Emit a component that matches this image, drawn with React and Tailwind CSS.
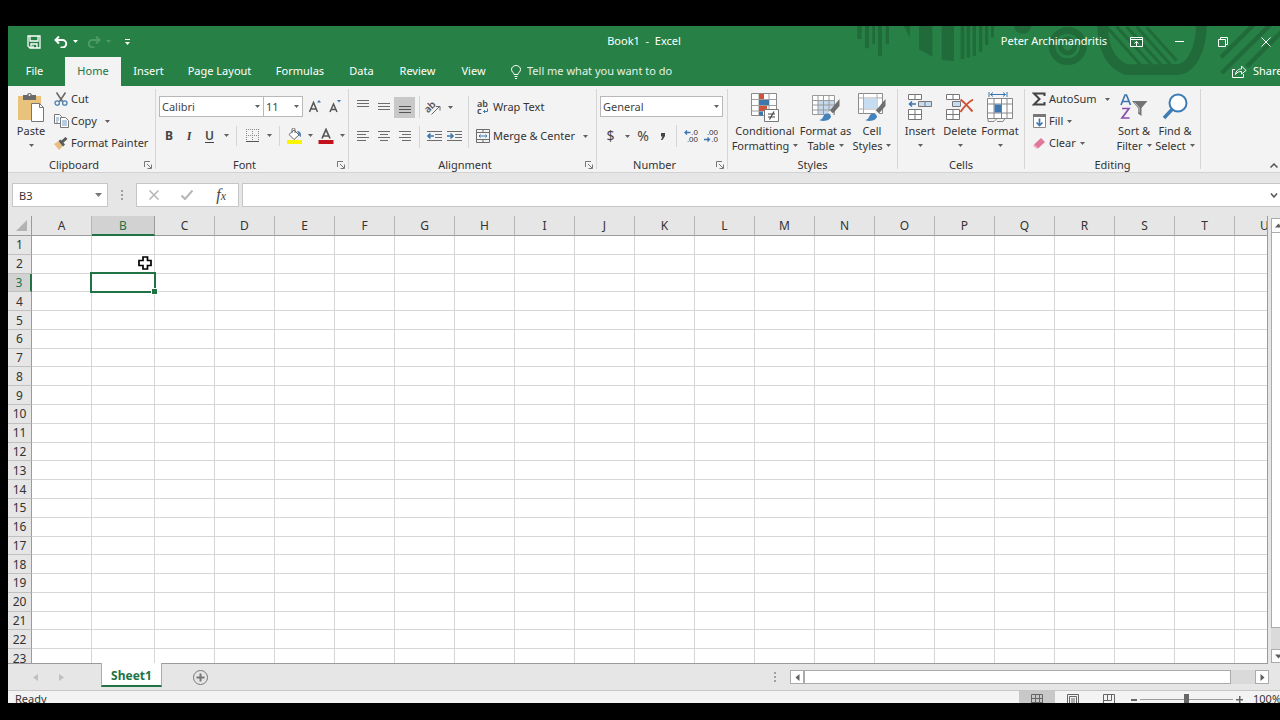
import { useState } from "react";

const TABS = [
  { name: "File", width: "w-[53px]" },
  { name: "Home", width: "ml-1 w-14" },
  { name: "Insert", width: "w-[55px]" },
  { name: "Page Layout", width: "w-[87px]" },
  { name: "Formulas", width: "w-[74px]" },
  { name: "Data", width: "w-[49px]" },
  { name: "Review", width: "w-[63px]" },
  { name: "View", width: "w-[49px]" },
];

const COLUMNS = "ABCDEFGHIJKLMNOPQRSTU".split("");
const ROWS = Array.from({ length: 23 }, (_, i) => i + 1);

/* ---------- small helpers ---------- */

function Caret({ className = "", fill = "fill-[#606060]" }) {
  return (
    <svg viewBox="0 0 5 3" className={`h-[3px] w-[5px] shrink-0 ${fill} ${className}`}>
      <path d="M0 0h5L2.5 3z" />
    </svg>
  );
}

function CaretButton({ label }) {
  return (
    <button aria-label={label} className="flex h-5 w-3 shrink-0 items-center justify-center">
      <Caret />
    </button>
  );
}

function IconButton({ label, className = "w-5", children }) {
  return (
    <button aria-label={label} className={`flex h-[21px] shrink-0 items-center justify-center ${className}`}>
      {children}
    </button>
  );
}

function Divider({ className = "h-[22px]" }) {
  return <div className={`w-px shrink-0 bg-[#d6d6d6] ${className}`} />;
}

function Group({ label, width, launcher, children }) {
  return (
    <>
      <section aria-label={label} className={`flex shrink-0 flex-col ${width}`}>
        <div className="flex h-[72px]">{children}</div>
        <div className="flex h-3.5 items-center">
          <span className="flex-1 text-center leading-[14px]">{label}</span>
          {launcher && (
            <button aria-label={`${label} settings`} className="flex w-[15px] items-center justify-center">
              <svg viewBox="0 0 8 8" className="h-2 w-2 fill-none stroke-[#777]">
                <path d="M.5 6V.5H6M3 3l4 4M7.5 3.5v4h-4" />
              </svg>
            </button>
          )}
        </div>
      </section>
      <div className="mt-[3px] mb-[3px] w-px shrink-0 bg-[#d6d6d6]" />
    </>
  );
}

function BigButton({ icon, line1, line2, width }) {
  return (
    <button className={`flex shrink-0 flex-col items-center pt-[5px] whitespace-nowrap ${width}`}>
      <span className="flex h-8 items-center justify-center">{icon}</span>
      <span className="leading-[15px]">{line1}</span>
      <span className="flex h-[15px] items-center gap-1 leading-[15px]">
        {line2}
        <Caret />
      </span>
    </button>
  );
}

function SmallButton({ icon, label, caret, gap = "gap-1" }) {
  return (
    <button className={`flex h-[22px] items-center whitespace-nowrap ${gap}`}>
      <span className="flex items-center gap-[3px]">
        <span className="flex w-3.5 shrink-0 justify-center">{icon}</span>
        {label}
      </span>
      {caret && <Caret />}
    </button>
  );
}

function Select({ label, value, width }) {
  return (
    <div className={`relative h-[21px] shrink-0 ${width}`}>
      <select
        aria-label={label}
        defaultValue={value}
        className="h-full w-full appearance-none border border-[#b8b8b8] bg-white pl-0.5 text-[11px] leading-[19px] text-[#444] outline-none"
      >
        <option>{value}</option>
      </select>
      <Caret className="pointer-events-none absolute top-[9px] right-1" />
    </div>
  );
}

/* ---------- icons ---------- */

function PasteIcon() {
  return (
    <svg viewBox="0 0 28 30" className="h-[30px] w-7">
      <path d="M1 4h23v24H1z" fill="#e9c27c" />
      <path d="M6 3h4a2.6 2.6 0 0 1 5 0h4v5H6z" fill="#6a6a6a" />
      <circle cx="12.500" cy="3" r="1" fill="#f3f3f3" />
      <path d="M14.500 11.500h8l4 4v14h-12z" fill="#fff" stroke="#777" />
      <path d="M22.500 11.500v4h4" fill="none" stroke="#777" />
    </svg>
  );
}

function CutIcon() {
  return (
    <svg viewBox="0 0 14 14" className="h-3.5 w-3.5 fill-none">
      <path d="M2.500 0.500l6 9M11.500 0.500l-6 9" stroke="#6a6a6a" strokeWidth="1.600" />
      <circle cx="3.200" cy="11" r="2.200" stroke="#4e83b5" strokeWidth="1.300" />
      <circle cx="10.800" cy="11" r="2.200" stroke="#4e83b5" strokeWidth="1.300" />
    </svg>
  );
}

function CopyIcon() {
  return (
    <svg viewBox="0 0 15 14" className="h-3.5 w-[15px] shrink-0">
      <path d="M.5.5h5l2 2v7h-7z" fill="#fff" stroke="#777" />
      <path d="M2 4h3M2 6h3M2 8h2" stroke="#6f9bc4" />
      <path d="M6.500 3.500h5l3 3v7h-8z" fill="#fff" stroke="#777" />
      <path d="M8 7h5M8 9h5M8 11h5" stroke="#6f9bc4" />
    </svg>
  );
}

function PainterIcon() {
  return (
    <svg viewBox="0 0 14 13" className="h-[13px] w-3.5">
      <path d="M0 7l5-3 4 5-4 4z" fill="#e9bd80" />
      <path d="M4.500 4l2-1.500 4.500 5-2 2z" fill="#595959" />
      <path d="M8 5l4.500-4" stroke="#595959" strokeWidth="3" />
    </svg>
  );
}

function BordersIcon() {
  return (
    <svg viewBox="0 0 13 13" className="h-[13px] w-[13px] fill-none stroke-[#8a8a8a]">
      <path d="M.5 0v12M6.500 0v12M12.500 0v12M0 .5h13M0 6.500h13" strokeDasharray="1 1" />
      <path d="M0 12.500h13" stroke="#555" />
    </svg>
  );
}

function FillColorIcon() {
  return (
    <svg viewBox="0 0 17 16" className="h-4 w-[17px]">
      <path d="M3 6.500l5-4.500 5 5-5 4.500z" fill="#fff" stroke="#666" />
      <path d="M6 5V1.500a1.500 1.500 0 0 1 3 0V5" fill="none" stroke="#666" />
      <path d="M11 3c3 0 4.500 2 4 6-1.500-.5-2-2-2.500-3z" fill="#4e83b5" />
      <path d="M1 12h15v4H1z" fill="#fbf500" />
    </svg>
  );
}

function LinesIcon({ rows, highlight }) {
  return (
    <svg viewBox="0 0 14 14" className={`h-3.5 w-3.5 ${highlight ? "stroke-[#555]" : "stroke-[#6c6c6c]"}`}>
      {rows.map(([x, y, w]) => (
        <path key={y} d={`M${x} ${y}.5h${w}`} />
      ))}
    </svg>
  );
}

function IndentIcon({ increase }) {
  return (
    <svg viewBox="0 0 15 13" className="h-[13px] w-[15px] fill-none">
      <path d="M0 .5h15M8 3.500h7M8 6.500h7M0 9.500h15" stroke="#6c6c6c" />
      <path d={increase ? "M0 5h6M3.500 2.500L6 5 3.500 7.500" : "M7 5H1M3.500 2.500L1 5l2.500 2.500"} stroke="#3e77ae" strokeWidth="1.600" />
    </svg>
  );
}

function OrientationIcon() {
  return (
    <svg viewBox="0 0 16 15" className="h-[15px] w-4 overflow-visible">
      <text x="0" y="11" transform="rotate(-45 4 10)" fontSize="10" fontWeight="600" fill="#555">
        ab
      </text>
      <path d="M5.500 14.500l8-8M10 6.500h4v4" fill="none" stroke="#666" />
    </svg>
  );
}

function WrapIcon() {
  return (
    <svg viewBox="0 0 12 15" className="h-[15px] w-3 overflow-visible">
      <text fontSize="9" fontWeight="600" fill="#444">
        <tspan x="0" y="7">ab</tspan>
        <tspan x="0" y="14">c</tspan>
      </text>
      <path d="M10.500 8.500v3H6.500M8 10l-1.500 1.500L8 13" fill="none" stroke="#3e77ae" />
    </svg>
  );
}

function MergeIcon() {
  return (
    <svg viewBox="0 0 14 14" className="h-3.5 w-3.5 fill-none stroke-[#6c6c6c]">
      <path d="M.5.5h13v13H.5zM.5 3.500h13M.5 10.500h13M7 .5v3M7 10.500v3" />
      <path d="M3 7h8M4.500 5.500L3 7l1.500 1.500M9.500 5.500L11 7 9.500 8.500" stroke="#3e77ae" />
    </svg>
  );
}

function DecimalIcon({ increase }) {
  return (
    <svg viewBox="0 0 14 14" className="h-3.5 w-3.5 overflow-visible font-['Liberation_Sans',sans-serif]">
      <text textAnchor="end" fontSize="8" fill="#333">
        <tspan x="14" y="6">{increase ? ".0" : ".00"}</tspan>
        <tspan x="14" y="13">{increase ? ".00" : ".0"}</tspan>
      </text>
      <path
        d={increase ? "M6.500 3.500H1M3 1.500l-2 2 2 2" : "M0 10.500h5.500M3.500 8.500l2 2-2 2"}
        fill="none"
        stroke="#3e77ae"
        strokeWidth="1.300"
      />
    </svg>
  );
}

function ConditionalIcon() {
  return (
    <svg viewBox="0 0 28 29" className="h-[29px] w-7">
      <path d="M.5.5h25v22H.5z" fill="#fff" stroke="#8a8a8a" />
      <path d="M.5 6.500h25M.5 12.500h25M.5 18h25M8 .5v22M18 .5v22" stroke="#a0a0a0" />
      <path d="M8 1h5v5H8zM8 13h8v5H8z" fill="#cf5339" />
      <path d="M8 7h10v5H8zM8 18.500h4v4H8z" fill="#3e77ae" />
      <path d="M13.500 16.500h14v12h-14z" fill="#fff" stroke="#777" />
      <path d="M17 21h7M17 24h7M23 18.500L18.500 26.500" stroke="#444" strokeWidth="1.200" />
    </svg>
  );
}

function BrushShape() {
  return (
    <>
      <path d="M27.500 6v7l-7 8-3-3z" fill="#6f6f6f" />
      <path d="M18 17.500l3.500 3.500-1.500 2-4-3.500z" fill="#f3f3f3" />
      <path d="M7 27c4-.5 3.500-3 5.500-5.500 2-2 6-1 6.500 2-.5 4-7 5.500-12 3.500z" fill="#4382bb" />
    </>
  );
}

function FormatTableIcon() {
  return (
    <svg viewBox="0 0 28 29" className="h-[29px] w-7">
      <path d="M.5 2.500h22v19H.5z" fill="#fff" />
      <path d="M6 7h17v15H6z" fill="#c6d9ec" />
      <path d="M.5 2.500h22v19H.5zM.5 7.500h22M.5 12h22M.5 17h22M6 2.500v19M11.500 2.500v19M17 2.500v19" fill="none" stroke="#9a9a9a" />
      <BrushShape />
    </svg>
  );
}

function CellStylesIcon() {
  return (
    <svg viewBox="0 0 28 29" className="h-[29px] w-7">
      <path d="M.5.5h24v20H.5z" fill="#fff" stroke="#8a8a8a" />
      <path d="M.5 5h24M.5 16h24M5.500.5v20M19 .5v20" stroke="#aaa" />
      <path d="M6 5.500h13v10H6z" fill="#c6dcf1" />
      <BrushShape />
    </svg>
  );
}

function InsertIcon() {
  return (
    <svg viewBox="0 0 26 28" className="h-7 w-[26px] fill-none stroke-[#777]">
      <path d="M1.500 1.500h13v5h-13zM8 1.500v5M1.500 16.500h13v10h-13zM8 16.500v10M1.500 21.500h13" fill="#fff" />
      <path d="M11.500 8.500h13v5h-13zM18 8.500v5" fill="#c6dcf1" />
      <path d="M9 11H2.500M5 8.500L2.500 11 5 13.500" stroke="#3e77ae" strokeWidth="1.600" />
    </svg>
  );
}

function DeleteIcon() {
  return (
    <svg viewBox="0 0 28 28" className="h-7 w-7 fill-none stroke-[#777]">
      <path d="M.5 1.500h13v5H.5zM7 1.500v5M.5 16.500h13v10H.5zM7 16.500v10M.5 21.500h13" fill="#fff" />
      <path d="M6.500 8.500h8v5h-8z" fill="#c6dcf1" />
      <path d="M14.500 6.500c4 3 8.500 8 12 12M27 6.500c-5 3-9.500 8-12.500 12.500" stroke="#cf5339" strokeWidth="2" />
    </svg>
  );
}

function FormatIcon() {
  return (
    <svg viewBox="0 0 28 31" className="h-[31px] w-7 fill-none stroke-[#888]">
      <path d="M3 0v5M21 0v5M4.500 2.500h15M7 .5L4.500 2.500 7 4.500M17 .5l2.500 2L17 4.500" stroke="#3e77ae" />
      <path d="M1.500 6.500h25v20h-25z" fill="#fff" />
      <path d="M1.500 12h25M1.500 21h25M8 6.500v20M15.500 6.500v20M21 6.500v20" />
      <path d="M8.500 12.500h7v8h-7z" fill="#3e77ae" stroke="none" />
      <path d="M2 26.500v3h6l3-3M11 29.500h6l2-3" />
    </svg>
  );
}

function SortIcon() {
  return (
    <svg viewBox="0 0 28 28" className="h-7 w-7">
      <path d="M1 12L5 2h1.500l4 10M2.500 8.500H9" fill="none" stroke="#3e77ae" strokeWidth="1.700" />
      <path d="M2 15.500h7L2 25h7.500" fill="none" stroke="#8a4fae" strokeWidth="1.700" />
      <path d="M12 8h15.500l-6 7v8l-3.500-2.500V15z" fill="#737373" />
      <path d="M14.500 9.500l4.500 5v5" fill="none" stroke="#ccc" />
    </svg>
  );
}

function FindIcon() {
  return (
    <svg viewBox="0 0 26 28" className="h-7 w-[26px] fill-none stroke-[#3e7cb5]">
      <circle cx="16" cy="10" r="8.500" fill="#fff" strokeWidth="2" />
      <path d="M10 16.500l-8 8.500" strokeWidth="3.500" />
    </svg>
  );
}

function TitleArt() {
  return (
    <svg viewBox="0 18 1320 180" className="pointer-events-none absolute top-0 right-0 h-[60px] w-[440px]">
      <g fill="#206b39">
        <path d="M52 15h13v42H52zM75 15h12v70H75zM97 15h8v57h-8zM114 15h12v92h-12zM137 15h10v57h-10zM190 15h20v38z" />
        <path d="M237 15h40v95l-40-22zM305 15h37v108l-37-3zM362 15h11v103h-11zM380 15h10v98h-10zM398 15h10v92h-10zM417 15h10v80h-10zM435 15h10v60h-10zM453 15h9v38h-9z" />
        <circle cx="548" cy="15" r="26" />
      </g>
      <g fill="none" stroke="#206b39">
        <circle cx="683" cy="78" r="47" strokeWidth="20" />
        <circle cx="683" cy="78" r="21" strokeWidth="15" />
        <path d="M788 15c0 70 25 115 70 134h150c45 0 76-60 76-134" strokeWidth="32" />
        <path d="M800 20l115 130M830 20l115 125M860 20l110 122M890 20l105 118M920 22l90 100" strokeWidth="9" />
        <path d="M1240 15l-97 97M1290 15l-145 145M1330 30l-110 110" strokeWidth="13" />
      </g>
    </svg>
  );
}

/* ---------- sections ---------- */

function TitleBar() {
  return (
    <header className="relative flex h-[31px] shrink-0 items-center text-white">
      <div className="flex flex-1 items-center">
        <IconButton label="Save" className="ml-[18px] w-4">
          <svg viewBox="0 0 14 14" className="h-3.5 w-3.5 fill-none stroke-white" strokeWidth="1.300">
            <path d="M1 1h12v12H3l-2-2zM3 1v5h8V1M4 13V9h6v4M6 10.500v2" />
          </svg>
        </IconButton>
        <IconButton label="Undo" className="ml-2.5 w-[18px]">
          <svg viewBox="0 0 14 12" className="h-3 w-3.5 fill-none stroke-white" strokeWidth="2">
            <path d="M5 .5L1.500 4 5 7.500M2 4h6.500a3.500 3.500 0 0 1 0 7.500H6.500" />
          </svg>
        </IconButton>
        <Caret className="ml-[3px]" fill="fill-white" />
        <IconButton label="Redo" className="ml-[7px] w-[18px]">
          <svg viewBox="0 0 14 12" className="h-3 w-3.5 fill-none stroke-[#4d9a66]" strokeWidth="2">
            <path d="M9 .5L12.500 4 9 7.500M12 4H5.500a3.500 3.500 0 0 0 0 7.500H7.500" />
          </svg>
        </IconButton>
        <Caret className="ml-[3px]" fill="fill-[#4d9a66]" />
        <IconButton label="Customize Quick Access Toolbar" className="ml-2 w-4">
          <svg viewBox="0 0 5 6" className="h-1.5 w-[5px] fill-white">
            <path d="M0 0h5v1H0zM0 3h5L2.500 6z" />
          </svg>
        </IconButton>
      </div>
      <h1 className="text-[11px] whitespace-pre">Book1  -  Excel</h1>
      <div className="flex flex-1 items-center justify-end">
        <TitleArt />
        <span className="relative mr-2 text-[11px]">Peter Archimandritis</span>
        <div className="relative flex">
          <IconButton label="Ribbon Display Options" className="w-[43px]">
            <svg viewBox="0 0 13 10" className="h-2.5 w-[13px] fill-none stroke-white">
              <path d="M.5.5h12v9H.5zM.5 2.500h12M6.500 9V4.500M4.500 6.500l2-2 2 2" />
            </svg>
          </IconButton>
          <IconButton label="Minimize" className="w-[43px]">
            <svg viewBox="0 0 9 1" className="h-px w-[9px] fill-white">
              <path d="M0 0h9v1H0z" />
            </svg>
          </IconButton>
          <IconButton label="Restore Down" className="w-[43px]">
            <svg viewBox="0 0 10 10" className="h-2.5 w-2.5 fill-none stroke-white">
              <path d="M.5 2.500h7v7h-7zM2.500 2.500v-2h7v7h-2" />
            </svg>
          </IconButton>
          <IconButton label="Close" className="ml-2 w-7">
            <svg viewBox="0 0 10 10" className="h-2.5 w-2.5 fill-none stroke-white">
              <path d="M.5.5l9 9M9.500.5l-9 9" />
            </svg>
          </IconButton>
        </div>
      </div>
    </header>
  );
}

function TabStrip({ active, onSelect }) {
  return (
    <nav className="relative flex h-[29px] shrink-0 items-stretch text-[11px] text-white">
      {TABS.map((tab) => (
        <button
          key={tab.name}
          onClick={() => onSelect(tab.name)}
          className={`shrink-0 whitespace-nowrap ${tab.width} ${active === tab.name ? "bg-[#f3f3f3] text-[#217346]" : ""}`}
        >
          {tab.name}
        </button>
      ))}
      <label className="ml-[13px] flex flex-1 items-center gap-1.5">
        <svg viewBox="0 0 10 14" className="h-3.5 w-2.5 fill-none stroke-white">
          <path d="M3 9.500c0-2-2.500-2.500-2.500-5a4.500 4 0 0 1 9 0c0 2.500-2.500 3-2.500 5zM3.500 11.500h3M4 13.500h2" />
        </svg>
        <input
          placeholder="Tell me what you want to do"
          className="w-52 bg-transparent outline-none placeholder:text-[#e4f1e8]"
        />
      </label>
      <button className="flex w-12 shrink-0 items-center gap-1.5 whitespace-nowrap">
        <svg viewBox="0 0 15 13" className="h-[13px] w-[15px] shrink-0 fill-none stroke-white">
          <path d="M3 4.500H.5v8h11V9M3.500 9.500c.5-4 3-5.500 6-5.500V1l4.500 4.500L9.500 9V6.500c-2.500 0-4.500.5-6 3z" />
        </svg>
        Share
      </button>
    </nav>
  );
}

function Ribbon() {
  return (
    <div className="flex h-[87px] shrink-0 border-b border-[#d2d2d2] bg-[#f3f3f3]">
      <Group label="Clipboard" width="w-[147px]" launcher>
        <BigButton icon={<PasteIcon />} line1="Paste" width="w-[46px]" />
        <div className="flex flex-col pt-0.5">
          <SmallButton icon={<CutIcon />} label="Cut" />
          <SmallButton icon={<CopyIcon />} label="Copy" caret gap="gap-2" />
          <SmallButton icon={<PainterIcon />} label="Format Painter" />
        </div>
      </Group>

      <Group label="Font" width="w-[192px]" launcher>
        <div className="flex flex-col gap-2 pt-2.5 pl-[3px]">
          <div className="flex items-center">
            <Select label="Font" value="Calibri" width="w-[105px]" />
            <div className="-ml-px">
              <Select label="Font Size" value="11" width="w-10" />
            </div>
            <IconButton label="Increase Font Size" className="ml-0.5 w-5">
              <svg viewBox="0 0 12 13" className="h-[13px] w-3">
                <path d="M.5 12L4.500 2.500 8.500 12M2 9h5" fill="none" stroke="#555" strokeWidth="1.500" />
                <path d="M8 2.500L10 0l2 2.500z" fill="#3e77ae" />
              </svg>
            </IconButton>
            <IconButton label="Decrease Font Size">
              <svg viewBox="0 0 12 13" className="h-[13px] w-3">
                <path d="M1 12l3.500-8L8 12M2.500 9.500h4" fill="none" stroke="#555" strokeWidth="1.500" />
                <path d="M8 0h4l-2 2.500z" fill="#3e77ae" />
              </svg>
            </IconButton>
          </div>
          <div className="flex items-center text-xs text-[#444]">
            <IconButton label="Bold">
              <b>B</b>
            </IconButton>
            <IconButton label="Italic">
              <i className="font-serif font-semibold">I</i>
            </IconButton>
            <IconButton label="Underline" className="w-[21px]">
              <span className="font-semibold underline underline-offset-2">U</span>
            </IconButton>
            <CaretButton label="Underline options" />
            <Divider className="mx-1 h-5" />
            <IconButton label="Borders" className="w-[22px]">
              <BordersIcon />
            </IconButton>
            <CaretButton label="Border options" />
            <Divider className="mx-1 h-5" />
            <IconButton label="Fill Color">
              <FillColorIcon />
            </IconButton>
            <CaretButton label="Fill options" />
            <IconButton label="Font Color">
              <svg viewBox="0 0 16 16" className="h-4 w-4">
                <path d="M4 10.500L8 1.500l4 9M5.500 8h5" fill="none" stroke="#555" strokeWidth="1.700" />
                <path d="M.5 12h15v4H.5z" fill="#c4121c" />
              </svg>
            </IconButton>
            <CaretButton label="Font color options" />
          </div>
        </div>
      </Group>

      <Group label="Alignment" width="w-[247px]" launcher>
        <div className="flex flex-col gap-2 pt-2.5 pl-1">
          <div className="flex items-center">
            <IconButton label="Top Align">
              <LinesIcon rows={[[1, 0, 12], [1, 3, 12], [1, 6, 12]]} />
            </IconButton>
            <IconButton label="Middle Align" className="w-[21px]">
              <LinesIcon rows={[[1, 3, 12], [1, 6, 12], [1, 9, 12]]} />
            </IconButton>
            <IconButton label="Bottom Align" className="w-[21px] bg-[#c8c8c8]">
              <LinesIcon rows={[[1, 6, 12], [1, 9, 12], [1, 12, 12]]} highlight />
            </IconButton>
            <Divider className="mr-1 ml-1 h-[22px]" />
            <IconButton label="Orientation">
              <OrientationIcon />
            </IconButton>
            <CaretButton label="Orientation options" />
          </div>
          <div className="flex items-center">
            <IconButton label="Align Left">
              <LinesIcon rows={[[1, 1, 12], [1, 4, 9], [1, 7, 12], [1, 10, 9]]} />
            </IconButton>
            <IconButton label="Center" className="w-[21px]">
              <LinesIcon rows={[[1, 1, 12], [3, 4, 8], [1, 7, 12], [3, 10, 8]]} />
            </IconButton>
            <IconButton label="Align Right" className="w-[21px]">
              <LinesIcon rows={[[1, 1, 12], [4, 4, 9], [1, 7, 12], [4, 10, 9]]} />
            </IconButton>
            <Divider className="mr-1 ml-1 h-[22px]" />
            <IconButton label="Decrease Indent">
              <IndentIcon />
            </IconButton>
            <IconButton label="Increase Indent">
              <IndentIcon increase />
            </IconButton>
          </div>
        </div>
        <Divider className="mt-2.5 ml-1 h-[52px]" />
        <div className="flex flex-col gap-[7px] pt-2.5 pl-[7px]">
          <SmallButton icon={<WrapIcon />} label="Wrap Text" />
          <SmallButton icon={<MergeIcon />} label="Merge & Center" caret gap="gap-2" />
        </div>
      </Group>

      <Group label="Number" width="w-[130px]" launcher>
        <div className="flex flex-col gap-2 pt-2.5 pl-[3px]">
          <Select label="Number Format" value="General" width="w-[123px]" />
          <div className="flex items-center text-sm text-[#444]">
            <IconButton label="Accounting Number Format" className="w-[21px]">$</IconButton>
            <CaretButton label="Accounting options" />
            <IconButton label="Percent Style">%</IconButton>
            <IconButton label="Comma Style">
              <svg viewBox="0 0 4 7" className="h-[7px] w-1 fill-[#444]">
                <path d="M0 0h4v3L1.500 7H0l1.500-3.500H0z" />
              </svg>
            </IconButton>
            <Divider className="mr-1 ml-[3px] h-[22px]" />
            <IconButton label="Increase Decimal">
              <DecimalIcon increase />
            </IconButton>
            <IconButton label="Decrease Decimal">
              <DecimalIcon />
            </IconButton>
          </div>
        </div>
      </Group>

      <Group label="Styles" width="w-[169px]">
        <BigButton icon={<ConditionalIcon />} line1="Conditional" line2="Formatting" width="w-[74px]" />
        <BigButton icon={<FormatTableIcon />} line1="Format as" line2="Table" width="w-[47px]" />
        <BigButton icon={<CellStylesIcon />} line1="Cell" line2="Styles" width="w-[46px]" />
      </Group>

      <Group label="Cells" width="w-[126px]">
        <div className="flex pl-0.5">
          <BigButton icon={<InsertIcon />} line1="Insert" width="w-10" />
          <BigButton icon={<DeleteIcon />} line1="Delete" width="w-10" />
          <BigButton icon={<FormatIcon />} line1="Format" width="w-10" />
        </div>
      </Group>

      <Group label="Editing" width="w-[175px]">
        <div className="flex w-[88px] flex-col pt-0.5 pl-[7px]">
          <SmallButton
            icon={
              <svg viewBox="0 0 14 14" className="h-3.5 w-3.5 fill-none stroke-[#444]" strokeWidth="2">
                <path d="M12.500 4V1.500H2L7.500 7 2 12.500h10.500V10" />
              </svg>
            }
            label="AutoSum"
            caret
            gap="gap-2"
          />
          <SmallButton
            icon={
              <svg viewBox="0 0 13 14" className="h-3.5 w-[13px]">
                <path d="M.5.5h12v13H.5z" fill="#fff" stroke="#888" />
                <path d="M0 0h13v3H0z" fill="#777" />
                <path d="M6.500 4.500v7M3.500 8.500l3 3 3-3" fill="none" stroke="#3e77ae" strokeWidth="1.700" />
              </svg>
            }
            label="Fill"
            caret
          />
          <SmallButton
            icon={
              <svg viewBox="0 0 12 11" className="h-[11px] w-3">
                <path d="M1 6.500L8 0l4 4-7 6.500z" fill="#e0789a" />
                <path d="M1 6.500l4 4H3L0 8z" fill="#f0b3c6" />
              </svg>
            }
            label="Clear"
            caret
          />
        </div>
        <BigButton icon={<SortIcon />} line1="Sort &" line2="Filter" width="w-[42px]" />
        <BigButton icon={<FindIcon />} line1="Find &" line2="Select" width="w-10" />
      </Group>

      <button aria-label="Collapse the Ribbon" className="mt-auto mr-0.5 mb-1 ml-auto">
        <svg viewBox="0 0 8 5" className="h-[5px] w-2 fill-none stroke-[#555]" strokeWidth="1.500">
          <path d="M.5 4.500L4 1l3.500 3.500" />
        </svg>
      </button>
    </div>
  );
}

function Dots() {
  return (
    <svg viewBox="0 0 2 10" className="h-2.5 w-0.5 shrink-0 fill-[#a0a0a0]">
      <path d="M0 0h2v2H0zM0 4h2v2H0zM0 8h2v2H0z" />
    </svg>
  );
}

function FormulaBar() {
  return (
    <div className="flex h-[43px] shrink-0 items-start pt-2.5 pl-1">
      <div className="relative h-6 w-[96px] shrink-0">
        <input
          aria-label="Name Box"
          defaultValue="B3"
          className="h-full w-full border border-[#c6c6c6] bg-white pl-1.5 text-[11px] outline-none"
        />
        <svg viewBox="0 0 7 4" className="pointer-events-none absolute top-2.5 right-1.5 h-1 w-[7px] fill-[#777]">
          <path d="M0 0h7L3.500 4z" />
        </svg>
      </div>
      <div className="flex h-6 w-7 shrink-0 items-center justify-center">
        <Dots />
      </div>
      <div className="flex h-6 w-[103px] shrink-0 items-center justify-around border border-[#c6c6c6] bg-white">
        <IconButton label="Cancel" className="w-7">
          <svg viewBox="0 0 10 10" className="h-2.5 w-2.5 fill-none stroke-[#b5b5b5]" strokeWidth="1.500">
            <path d="M.5.5l9 9M9.500.5l-9 9" />
          </svg>
        </IconButton>
        <IconButton label="Enter" className="w-7">
          <svg viewBox="0 0 12 10" className="h-2.5 w-3 fill-none stroke-[#b5b5b5]" strokeWidth="2">
            <path d="M.5 5.500L4 9l7.500-8.500" />
          </svg>
        </IconButton>
        <IconButton label="Insert Function" className="w-7">
          <span className="font-['Liberation_Serif',serif] text-base text-[#444] italic">
            f<span className="text-xs">x</span>
          </span>
        </IconButton>
      </div>
      <div className="relative ml-[3px] h-6 flex-1">
        <input aria-label="Formula Bar" className="h-full w-full border-y border-l border-[#c6c6c6] bg-white px-2 outline-none" />
        <svg viewBox="0 0 8 5" className="absolute top-2.5 right-0.5 h-[5px] w-2 fill-none stroke-[#555]" strokeWidth="1.500">
          <path d="M1 .5L4 4 7 .5" />
        </svg>
      </div>
    </div>
  );
}

function ScrollArrow({ label, d, className }) {
  return (
    <button aria-label={label} className={`flex shrink-0 items-center justify-center border border-[#ababab] bg-white ${className}`}>
      <svg viewBox="0 0 7 7" className="h-[7px] w-[7px] shrink-0 fill-[#606060]">
        <path d={d} />
      </svg>
    </button>
  );
}

function Cell({ column, row }) {
  const active = column === "B" && row === 3;
  return (
    <td className="relative border-r border-b border-[#d6d6d6] bg-white p-0">
      {active && (
        <div className="absolute -inset-0.5 z-10 border-2 border-[#217346]">
          <div className="absolute -right-[3px] -bottom-[3px] h-[5px] w-[5px] bg-[#217346] outline outline-white" />
        </div>
      )}
      {column === "B" && row === 2 && (
        <svg viewBox="0 0 14 14" className="absolute top-px right-0.5 z-10 h-3.5 w-3.5">
          <path d="M5 1h4.500v3.500H13v5H9.500V13H5V9.500H1v-5h4z" fill="#fff" stroke="#000" strokeWidth="1.700" />
        </svg>
      )}
    </td>
  );
}

function Sheet() {
  return (
    <div className="flex min-h-0 flex-1">
      <div className="min-w-0 flex-1 overflow-hidden border-r border-[#9b9b9b]">
        <table className="h-[452px] w-[1287px] table-fixed border-separate border-spacing-0 text-xs text-[#333]">
          <colgroup>
            <col className="w-6" />
            {COLUMNS.map((c) => (
              <col key={c} className={c === "B" ? "w-[63px]" : "w-[60px]"} />
            ))}
          </colgroup>
          <thead>
            <tr className="h-5">
              <th aria-label="Select All" className="border-r border-b border-[#9b9b9b] p-0 pr-1">
                <svg viewBox="0 0 11 11" className="ml-auto h-[11px] w-[11px] fill-[#b3b3b3]">
                  <path d="M11 0v11H0z" />
                </svg>
              </th>
              {COLUMNS.map((c) => (
                <th
                  key={c}
                  className={`border-r p-0 font-normal ${
                    c === "B"
                      ? "border-b-2 border-r-[#9b9b9b] border-b-[#217346] bg-[#d2d2d2] pt-px leading-[17px] text-[#217346]"
                      : "border-b border-r-[#b5b5b5] border-b-[#9b9b9b] leading-[18px]"
                  }`}
                >
                  {c}
                </th>
              ))}
            </tr>
          </thead>
          <tbody>
            {ROWS.map((row) => (
              <tr key={row}>
                <th
                  className={`border-b border-b-[#c0c0c0] p-0 text-center leading-[17px] font-normal ${
                    row === 3
                      ? "border-r-2 border-r-[#217346] bg-[#d2d2d2] text-[#217346]"
                      : "border-r border-r-[#9b9b9b]"
                  }`}
                >
                  {row}
                </th>
                {COLUMNS.map((c) => (
                  <Cell key={c} column={c} row={row} />
                ))}
              </tr>
            ))}
          </tbody>
        </table>
      </div>
      <div className="flex w-3 shrink-0 flex-col overflow-hidden pt-0.5 pl-[3px]">
        <ScrollArrow label="Scroll up" d="M0 5.500h7l-3.500-4z" className="h-[15px] w-[15px]" />
        <div className="-mt-px flex-1 bg-[#dadada]">
          <div className="h-[95%] w-[15px] border border-[#ababab] bg-white" />
        </div>
        <ScrollArrow label="Scroll down" d="M0 1.500h7L3.500 5.500z" className="h-3.5 w-[15px]" />
      </div>
    </div>
  );
}

function SheetTabs() {
  return (
    <div className="flex h-[27px] shrink-0">
      <div className="flex w-[93px] shrink-0 items-center justify-center gap-[21px] border-t border-[#9b9b9b] pr-3">
        <svg viewBox="0 0 5 7" className="h-[7px] w-[5px] fill-[#c0c0c0]">
          <path d="M5 0v7L0 3.500z" />
        </svg>
        <svg viewBox="0 0 5 7" className="h-[7px] w-[5px] fill-[#c0c0c0]">
          <path d="M0 0v7l5-3.500z" />
        </svg>
      </div>
      <button className="h-6 w-[61px] shrink-0 border-x border-b-2 border-x-[#ababab] border-b-[#217346] bg-white pt-[3px] text-xs font-bold text-[#217346]">
        Sheet1
      </button>
      <div className="mr-3 flex flex-1 items-center border-t border-[#9b9b9b] pl-[31px]">
        <button aria-label="New sheet">
          <svg viewBox="0 0 15 15" className="h-[15px] w-[15px] fill-none stroke-[#777]">
            <circle cx="7.500" cy="7.500" r="7" />
            <path d="M7.500 3.500v8M3.500 7.500h8" strokeWidth="2" />
          </svg>
        </button>
        <div className="ml-auto flex w-[494px] items-center gap-[14px]">
          <Dots />
          <div className="-mr-px flex flex-1 bg-[#dadada]">
            <ScrollArrow label="Scroll left" d="M5.500 0v7L1.500 3.500z" className="h-3.5 w-3.5" />
            <div className="w-[427px] border border-[#ababab] bg-white" />
            <ScrollArrow label="Scroll right" d="M1.500 0v7l4-3.500z" className="ml-auto h-3.5 w-3.5" />
          </div>
        </div>
      </div>
    </div>
  );
}

function StatusBar() {
  return (
    <footer className="h-[13px] shrink-0 overflow-hidden border-t border-[#c6c6c6] bg-[#f3f3f3]">
      <div className="flex h-[17px] items-center pl-[7px]">
        <span className="flex-1">Ready</span>
        <IconButton label="Normal" className="w-9 bg-[#c8c8c8]">
          <svg viewBox="0 0 12 12" className="h-3 w-3 fill-none stroke-[#666]">
            <path d="M.5.5h11v11H.5zM4.500.5v11M8.500.5v11M.5 4.500h11M.5 8.500h11" />
          </svg>
        </IconButton>
        <IconButton label="Page Layout" className="w-9">
          <svg viewBox="0 0 12 12" className="h-3 w-3 fill-none stroke-[#666]">
            <path d="M.5.5h11v11H.5zM2.500 2.500h7v9h-7zM4 5h4M4 7h4M4 9h4" />
          </svg>
        </IconButton>
        <IconButton label="Page Break Preview" className="w-9">
          <svg viewBox="0 0 12 12" className="h-3 w-3 fill-none stroke-[#666]">
            <path d="M.5.5h11v11H.5zM4.500.5v6M8.500.5v6M.5 6.500h8" />
          </svg>
        </IconButton>
        <button aria-label="Zoom out" className="ml-1 h-0.5 w-1.5 bg-[#666]" />
        <input
          type="range"
          aria-label="Zoom"
          defaultValue="50"
          className="mx-[3px] h-3 w-[93px] appearance-none bg-transparent [&::-webkit-slider-runnable-track]:h-px [&::-webkit-slider-runnable-track]:bg-[#9b9b9b] [&::-webkit-slider-thumb]:-mt-[5px] [&::-webkit-slider-thumb]:h-[11px] [&::-webkit-slider-thumb]:w-[5px] [&::-webkit-slider-thumb]:appearance-none [&::-webkit-slider-thumb]:bg-[#666]"
        />
        <button aria-label="Zoom in">
          <svg viewBox="0 0 7 7" className="h-[7px] w-[7px] fill-[#666]">
            <path d="M0 3h7v1.500H0zM3 0h1.500v7H3z" />
          </svg>
        </button>
        <span className="ml-2.5 w-[27px] whitespace-nowrap">100%</span>
      </div>
    </footer>
  );
}

export default function App() {
  const [activeTab, setActiveTab] = useState("Home");

  return (
    <div className="flex h-screen flex-col overflow-hidden bg-black pt-[26px] pb-[17px] pl-2">
      <div className="flex min-h-0 flex-1 flex-col overflow-hidden bg-[#e6e6e6] font-['Noto_Sans',sans-serif] text-[11px] text-[#333]">
        <div className="relative shrink-0 bg-[#278146]">
          <TitleBar />
          <TabStrip active={activeTab} onSelect={setActiveTab} />
        </div>
        <Ribbon />
        <FormulaBar />
        <Sheet />
        <SheetTabs />
        <StatusBar />
      </div>
    </div>
  );
}
